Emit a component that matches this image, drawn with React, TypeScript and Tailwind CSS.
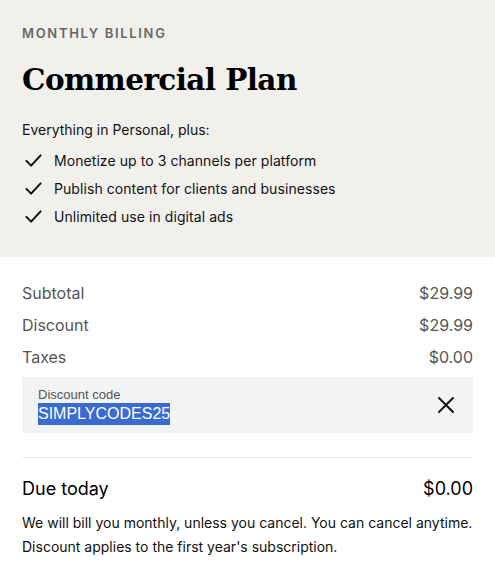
import React from "react";

const features = [
  "Monetize up to 3 channels per platform",
  "Publish content for clients and businesses",
  "Unlimited use in digital ads",
];

function Check() {
  return (
    <svg width="19" height="19" viewBox="0 0 24 24" fill="none" stroke="#111" strokeWidth="2.5" strokeLinecap="round" strokeLinejoin="round">
      <path d="M3 12.5l6 6L21 5.5" />
    </svg>
  );
}

export default function App() {
  return (
    <div className="w-[495px] h-[580px] bg-white font-['Inter',sans-serif] text-[#111]">
      <div className="bg-[#f2f0ed] h-[257px] px-[22px] pt-[25px]">
        <div className="text-[13px] font-semibold tracking-[0.13em] text-[#666] leading-4">MONTHLY BILLING</div>
        <h1 className="mt-[19px] font-['DejaVu_Serif',serif] font-bold text-[29.5px] leading-[40px] tracking-[-0.02em] text-black">
          Commercial Plan
        </h1>
        <p className="mt-[20px] text-[14px] leading-5">Everything in Personal, plus:</p>
        <ul className="mt-[6px] flex flex-col">
          {features.map((f) => (
            <li key={f} className="flex items-center h-[28px]">
              <span className="w-[32px] pl-[2px] flex items-center">
                <Check />
              </span>
              <span className="text-[14px] tracking-[0.005em]">{f}</span>
            </li>
          ))}
        </ul>
      </div>

      <div className="px-[22px]">
        <div className="pt-[20px] flex flex-col text-[16px] text-[#555]">
          {[
            ["Subtotal", "$29.99"],
            ["Discount", "$29.99"],
            ["Taxes", "$0.00"],
          ].map(([k, v]) => (
            <div key={k} className="flex justify-between items-center h-[32px]">
              <span>{k}</span>
              <span>{v}</span>
            </div>
          ))}
        </div>

        <div className="mt-[4px] h-[56px] bg-[#f1f3f5] flex items-center justify-between pl-[16px] pr-[18px] font-['Liberation_Sans',sans-serif]">
          <div className="flex flex-col pt-[2px]">
            <span className="text-[13px] leading-[14px] text-[#555]">Discount code</span>
            <span className="mt-[1px] text-[16px] leading-[22px] font-medium text-white bg-[#3a6bd0] self-start">SIMPLYCODES25</span>
          </div>
          <svg width="18" height="18" viewBox="0 0 18 18" stroke="#111" strokeWidth="2" strokeLinecap="round">
            <path d="M2 2l14 14M16 2L2 16" />
          </svg>
        </div>

        <div className="mt-[24px] border-t border-[#eaeaea]" />

        <div className="mt-[18px] flex justify-between items-center text-[18px] leading-[26px] text-black">
          <span>Due today</span>
          <span>$0.00</span>
        </div>

        <div className="mt-[9px] text-[14px] leading-[24px] text-[#111]">
          <p>We will bill you monthly, unless you cancel. You can cancel anytime.</p>
          <p>Discount applies to the first year's subscription.</p>
        </div>
      </div>
    </div>
  );
}
